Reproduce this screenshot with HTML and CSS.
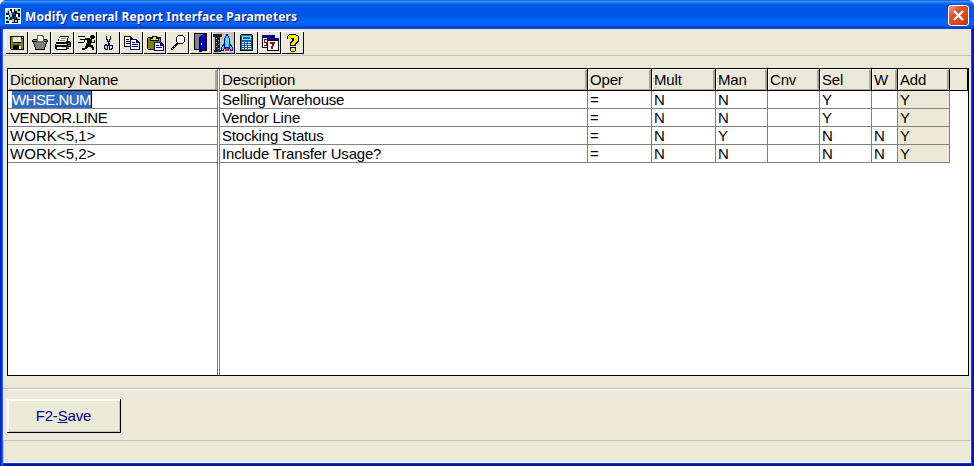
FILE: index.html
```
<!DOCTYPE html>
<html lang="en"><head><meta charset="utf-8"><title>Modify General Report Interface Parameters</title><link rel="stylesheet" href="styles.css"></head>
<body>
<div class="window">
<header class="titlebar">
<svg class="app-icon" viewBox="0 0 16 16"><path fill="#fff" d="M0 0h16v16H0z"/><path fill="#000" d="M1 1h14v14H1z"/><path fill="#70e0e8" d="M1 3h2v2H1zM3 1h2v2H3zM4 5h3v2H4zM10 1h3v2h-3zM12 3h3v2h-3zM3 9h2v2H3zM5 7h2v2H5zM1 11h3v2H1zM7 11h2v3H7zM12 9h3v2h-3zM10 12h2v2h-2z"/><path fill="#fff" d="M1 1h2v2H1zM4 3h2v2H4zM7 1h2v3H7zM1 7h3v2H1zM4 12h3v3H4zM11 6h2v3h-2zM13 12h2v3h-2z"/><path fill="#084080" d="M7 4h3v3H7zM6 9h2v2H6zM9 8h2v3H9z"/></svg>
<h1>Modify General Report Interface Parameters</h1>
<button class="close" aria-label="Close"><svg viewBox="0 0 19 19"><path d="M5 5l9 9M14 5l-9 9" stroke="#fff" stroke-width="2.4"/></svg></button>
</header>
<main>
<nav class="toolbar">
<button><svg viewBox="0 0 23 23"><path fill="#000" d="M5 5h14v14H6l-1-1z"/><path fill="#808000" d="M6 6h2v6h8V8h2v10H6z"/><path fill="#ece9d8" d="M8 6h8v5H8zM17 6h1v1h-1zM14 15h2v3h-2z"/><path fill="#000" d="M8 14h6v4H8z"/></svg></button>
<button><svg viewBox="0 0 23 23"><path fill="#000" d="M5 8h14v1h1v2h-1v2h-1v3h-1v3H7v-3H6v-3H5v-2H4V9h1z"/><path fill="#808080" d="M5 9h14v1H5zM6 11h12v2H6zM7 13h10v3H7zM8 16h8v2H8z"/><path fill="#606060" d="M9 4h5l2 2v5H9z"/><path fill="#fff" d="M10 5h4v1h1v4h-5z"/></svg></button>
<button><svg viewBox="0 0 23 23"><path fill="#000" d="M9 5h9v2h-1v3h2v1h1v5h-2v2h-2v1H5v-1H4v-5h1v-2h2V8h1V6h1z"/><path fill="#fff" d="M9 6h8l-2 5H7l1-2zM5 13h11v1H5zM6 16h9v2H6z"/><path fill="#808080" d="M10 7h5v1h-5zM9 9h5v1H9zM17 12h2v1h-2zM17 14h2v1h-2zM16 16h2v1h-2z"/><path fill="#e8e000" d="M11 16h3v1h-3z"/></svg></button>
<button><svg viewBox="0 0 23 23"><path fill="#000" d="M4 5h7v1H4zM6 8h4v1H6zM4 11h6v1H4zM17 4h3v1h1v2h-1v1h-3V7h-1V5h1zM11 7h5v1h2v3h2V9h1v3h-4v2h2v2h1v3h-2v-2h-1v-1h-3v1h-1v1h-2v1H8v-2h3v-2h1v-3h1V9h-2v2h-1V8h1z"/></svg></button>
<button><svg viewBox="0 0 23 23"><path fill="#000" d="M9 5h1v3h1v2h1V8h1V5h1v4h-1v2h-1v2h-1v-2h-1V9H9z"/><path fill="none" stroke="#000080" d="M11.500 12v2H9.500v-1H8.500v1H7.500v3h1v1h2v-4M12.500 12v2h3v3h-1v1h-2v-4"/></svg></button>
<button><svg viewBox="0 0 23 23"><path fill="#000" d="M4 5h6l3 3v8H4z"/><path fill="#fff" d="M5 6h5v2h2v7H5z"/><path fill="#000" d="M6 8h3v1H6zM6 10h5v1H6zM6 12h5v1H6z"/><path fill="#000080" d="M10 8h6l4 4v7H10z"/><path fill="#fff" d="M11 9h5v3h3v6h-8z"/><path fill="#000080" d="M12 11h3v1h-3zM12 13h6v1h-6zM12 15h6v1h-6z"/></svg></button>
<button><svg viewBox="0 0 23 23"><path fill="#000" d="M5 6h4V5h5v1h4v13H5l-1-1V7z"/><path fill="#808000" d="M5 7h12v11H5z"/><path fill="#000" d="M7 7h9v3H7z"/><path fill="#e8e080" d="M8 8h7v1H8zM10 6h3v2h-3z"/><path fill="#000080" d="M11 11h7l3 3v6H11z"/><path fill="#fff" d="M12 12h5v3h3v4h-8z"/><path fill="#000080" d="M13 14h3v1h-3zM13 16h6v1h-6z"/></svg></button>
<button><svg viewBox="0 0 23 23"><path fill="#000" d="M12 4h5v1h1v1h1v5h-1v1h-1v1h-5v-1h-1v-1h-1V6h1V5h1zM10 12h2v2h-1v1h-1v1H9v1H8v1H7v1H5v-2h1v-1h1v-1h1v-1h1v-1h1z"/><path fill="#fff" d="M12 5h5v1h1v5h-1v1h-5v-1h-1V6h1z"/><path fill="#c0c0c0" d="M6 17h1v1H6zM8 15h1v1H8z"/></svg></button>
<button><svg viewBox="0 0 23 23"><path fill="#000" d="M5 2h13v18h-6v1h-2v-2H5z"/><path fill="#808080" d="M6 3h11v15H6z"/><path fill="#000" d="M10 6l6-4h1v17l-6 2h-1z"/><path fill="#0000c0" d="M11 6l5-3v15l-5 2z"/><path fill="#fff" d="M12 12h1v2h-1z"/></svg></button>
<button class="pressed"><svg viewBox="0 0 23 23"><path fill="#202020" d="M1 3h9v3H8v14H3V6H1zM2 19h7v2H2z"/><path fill="#c0c0c0" d="M4 7h1v1H4zM6 9h1v1H6zM4 11h1v1H4zM6 13h1v1H6zM4 15h1v1H4zM6 17h1v1H6z"/><path fill="#0000d0" d="M14 3h2v2h1v2h1v6h1v1h1v2h1v4h-3v-2h-6v2H9v-4h1v-2h1v-1h1V7h1V5h1z"/><path fill="#30e8f8" d="M14 5h2v2h1v9h-4V7h1zM11 15h1v3h-1v1h-1v-3h1zM18 15h1v1h1v3h-1v-1h-1z"/><path fill="#fff" d="M13 18h4v3h-4z"/><path fill="#f02000" d="M14 17h2v1h1v2h-4v-2h1z"/></svg></button>
<button><svg viewBox="0 0 23 23"><path fill="#000" d="M6 3h11v1h1v16H5V4h1z"/><path fill="#0864a8" d="M6 4h11v15H6z"/><path fill="#90e0f8" d="M7 5h9v4H7z"/><path fill="#0864a8" d="M8 6h7v2H8z"/><path fill="#fff" d="M7 11h2v1H7zM10 11h2v1h-2zM13 11h3v1h-3zM7 13h2v1H7zM10 13h2v1h-2zM13 13h3v1h-3zM7 15h2v1H7zM10 15h2v1h-2zM13 15h3v1h-3zM7 17h2v1H7zM10 17h2v1h-2zM13 17h3v1h-3z"/></svg></button>
<button><svg viewBox="0 0 23 23"><path fill="#000" d="M4 4h13v13H4z"/><path fill="#fff" d="M5 7h11v9H5z"/><path fill="#000080" d="M4 4h13v3H4z"/><path fill="#a00020" d="M6 8h3v1H7v2h2v4H6v-1h2v-2H6z"/><path fill="#000" d="M9 7h12v13H9z"/><path fill="#fff" d="M10 10h10v9H10z"/><path fill="#000080" d="M9 7h12v2H9z"/><path fill="#a00020" d="M12 11h5v2h-1v2h-1v3h-2v-3h1v-2h-2z"/></svg></button>
<button><svg viewBox="0 0 23 23"><path fill="#000" d="M8 3h7v1h2v1h1v6h-1v1h-1v1h-1v2H9v-4h1v-1h1V8H6V5h1V4h1zM9 16h6v4h-1v1h-4v-1H9z"/><path fill="#fff000" d="M8 4h7v1h2v5h-1v1h-1v1h-1v2h-4v-2h1v-1h1v-1h1V7h-3v1H7V5h1zM10 17h4v3h-4z"/></svg></button>
</nav>
<section class="grid">
<div class="row head"><div>Dictionary Name</div><i></i><div>Description</div><div>Oper</div><div>Mult</div><div>Man</div><div>Cnv</div><div>Sel</div><div>W</div><div>Add</div><div class="stub"></div></div>
<div class="row"><div><span class="selected">WHSE.NUM</span></div><i></i><div>Selling Warehouse</div><div>=</div><div>N</div><div>N</div><div></div><div>Y</div><div></div><div>Y</div></div>
<div class="row"><div class="tight">VENDOR.LINE</div><i></i><div>Vendor Line</div><div>=</div><div>N</div><div>N</div><div></div><div>Y</div><div></div><div>Y</div></div>
<div class="row"><div class="code">WORK&lt;5,1&gt;</div><i></i><div>Stocking Status</div><div>=</div><div>N</div><div>Y</div><div></div><div>N</div><div>N</div><div>Y</div></div>
<div class="row"><div class="code">WORK&lt;5,2&gt;</div><i></i><div>Include Transfer Usage?</div><div>=</div><div>N</div><div>N</div><div></div><div>N</div><div>N</div><div>Y</div></div>
<div class="rest"></div>
</section>
<section class="actions"><button class="save"><span>F2-<u>S</u>ave</span></button></section>
<footer></footer>
</main>
</div>
</body></html>
```
FILE: styles.css
```
* { box-sizing: border-box; }
body { margin: 0; overflow: hidden; background: #ece9d8; font: 15px/17px "Liberation Sans", Arial, sans-serif; color: #000; }
button { padding: 0; border: 0; background: none; font: inherit; display: block; }
svg { display: block; shape-rendering: crispEdges; }
.window { width: 974px; height: 466px; display: flex; flex-direction: column; padding: 0 3px 3px; border-radius: 7px 7px 0 0; background: linear-gradient(90deg, #0019cf 0 1px, #0831d9 1px 2px, #166aee 2px 3px, transparent 3px 971px, #0a45e4 971px 972px, #001fb8 972px 973px, #00138c 973px), linear-gradient(#0831d9 0 463px, #0831d9 463px 464px, #001ea0 464px 465px, #00138c 465px); }
.titlebar { height: 29px; flex: none; margin: 0 -3px; padding: 3px 5px 0; display: flex; align-items: center; border-radius: 7px 7px 0 0; background: linear-gradient(#0058e6 0, #3a93ff 1.500px, #1170f5 3px, #0055e5 5px, #0054e3 9px, #0055e8 16px, #0266fb 22px, #0262f4 25px, #0047d0 27px, #003dd7 29px); }
.app-icon { width: 16px; height: 16px; margin-top: -1px; }
h1 { flex: 1; margin: 1px 0 0 4px; font: 700 12px/20px "Noto Sans", sans-serif; letter-spacing: 0.140px; color: #fff; text-shadow: 1px 1px #0a1883; white-space: nowrap; }
.close { width: 21px; height: 21px; margin-top: -1px; border: 1px solid #fff; border-radius: 3px; background: linear-gradient(135deg, #f0a08a, #e05030 35%, #d84420 70%, #b83010); }
.close svg { width: 19px; height: 19px; shape-rendering: auto; }
main { flex: 1; min-height: 0; display: flex; flex-direction: column; background: #ece9d8; }
.toolbar { height: 27px; flex: none; display: flex; padding: 2px 2px 0; border-bottom: 1px solid #c0c0c0; }
.toolbar button { width: 23px; height: 23px; background: #ece9d8; box-shadow: inset 1px 1px #fff, inset -1px -1px #000; }
.toolbar svg { width: 23px; height: 23px; }
.toolbar .pressed { background: #c8c6bc; }
.grid { width: 962px; height: 308px; flex: none; margin: 12px 0 0 4px; border: 1px solid #000; background: #fff; display: flex; flex-direction: column; letter-spacing: -0.180px; }
.row { display: grid; grid-template-columns: 210px 2px 368px 64px 64px 52px 52px 52px 26px 52px 18px; grid-template-rows: 100%; height: 18px; flex: none; white-space: nowrap; }
.row > div { padding-left: 2px; border-right: 1px solid #808080; border-bottom: 1px solid #808080; }
.row > i { border-right: 1px solid #808080; }
.row > div:nth-child(10) { background: #ece9d8; }
.row > .tight { letter-spacing: -0.400px; }
.row > .code { letter-spacing: 0.050px; }
.head { height: 22px; line-height: 22px; }
.head > div { background: #ece9d8; border-right-color: #000; border-bottom-color: #000; box-shadow: inset 1px 1px #fff, inset -2px -1px #aca899; }
.head > div:first-child { border-right-color: #808080; }
.head > .stub { box-shadow: none; }
.selected { display: inline-block; height: 17px; margin-left: 2px; color: #fff; background: #316ac5; border-right: 1px solid #000; letter-spacing: -0.550px; }
.rest { flex: 1; width: 212px; border-right: 1px solid #808080; background: linear-gradient(90deg, #fff 209px, #808080 209px 210px, #fff 210px); }
.actions { height: 52px; flex: none; margin-top: 12px; border-top: 1px solid #c0c0c0; box-shadow: inset 0 1px #fff; padding: 10px 0 0 4px; }
.save { width: 114px; height: 34px; color: #000090; letter-spacing: -0.150px; box-shadow: inset -1px -1px #000, inset 2px 2px #fff, inset -2px -2px #c0c0c0; }
.save span { display: block; padding: 0 1px 2px 0; }
footer { flex: 1; border: 1px solid #c0c0c0; border-right-color: #fff; border-bottom-color: #fff; }
```
